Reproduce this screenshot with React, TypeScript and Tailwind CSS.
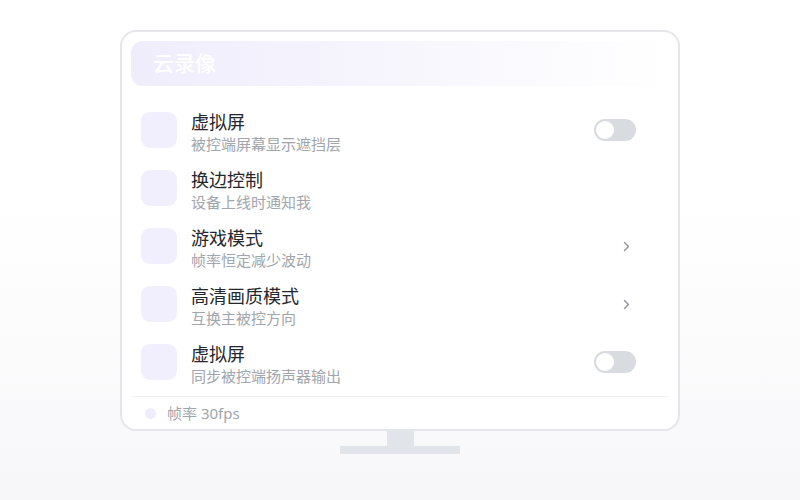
import React from "react";

type Row = { title: string; sub: string; trail: "toggle" | "chevron" | "none" };

const rows: Row[] = [
  { title: "虚拟屏", sub: "被控端屏幕显示遮挡层", trail: "toggle" },
  { title: "换边控制", sub: "设备上线时通知我", trail: "none" },
  { title: "游戏模式", sub: "帧率恒定减少波动", trail: "chevron" },
  { title: "高清画质模式", sub: "互换主被控方向", trail: "chevron" },
  { title: "虚拟屏", sub: "同步被控端扬声器输出", trail: "toggle" },
];

function Toggle() {
  return (
    <div className="w-[42px] h-[22px] rounded-full bg-[#d8dbe0] flex items-center px-[2px]">
      <div className="w-[18px] h-[18px] rounded-full bg-white" />
    </div>
  );
}

function Chevron() {
  return (
    <div className="w-[42px] flex justify-end pr-[6px]">
      <svg width="7" height="11" viewBox="0 0 7 11" fill="none">
        <path d="M1.5 1.5l4 4-4 4" stroke="#8e939b" strokeWidth="1.4" strokeLinecap="round" strokeLinejoin="round" />
      </svg>
    </div>
  );
}

export default function App() {
  return (
    <div
      className="w-[800px] h-[500px] bg-gradient-to-b from-white from-40% to-[#f7f7f9] flex flex-col items-center pt-[30px]"
      style={{ fontFamily: '"Noto Sans", "Noto Sans CJK SC", sans-serif' }}
    >
      <div className="w-[560px] h-[401px] border-2 border-[#e4e6ea] rounded-[16px] bg-white p-[9px] pb-0 flex flex-col">
        <div className="h-[45px] rounded-[12px] bg-gradient-to-r from-[#efedfc] to-white/0 flex items-center px-[22px]">
          <span className="text-white text-[21px] font-medium leading-none">云录像</span>
        </div>
        <div className="flex flex-col mt-[15px]">
          {rows.map((r, i) => (
            <div key={i} className="h-[58px] flex items-center pl-[10px] pr-[33px]">
              <div className="w-[36px] h-[36px] rounded-[9px] bg-[#f1eefd]" />
              <div className="flex flex-col ml-[14px] flex-1 pt-[6px]">
                <span className="text-[18px] leading-[22px] text-[#24272d]">{r.title}</span>
                <span className="text-[15px] leading-[22px] text-[#a1a5ac]">{r.sub}</span>
              </div>
              {r.trail === "toggle" && <Toggle />}
              {r.trail === "chevron" && <Chevron />}
            </div>
          ))}
        </div>
        <div className="mt-[5px] mx-[1px] h-px bg-[#eef0f3]" />
        <div className="flex items-center flex-1 pl-[14px]">
          <div className="w-[11px] h-[11px] rounded-full bg-[#efecfd]" />
          <span className="ml-[11px] text-[15px] text-[#a1a5ac] leading-none">帧率 30fps</span>
        </div>
      </div>
      <div className="w-[27px] h-[15px] bg-[#e1e4e8]" />
      <div className="w-[120px] h-[8px] bg-[#e1e4e8]" />
    </div>
  );
}
